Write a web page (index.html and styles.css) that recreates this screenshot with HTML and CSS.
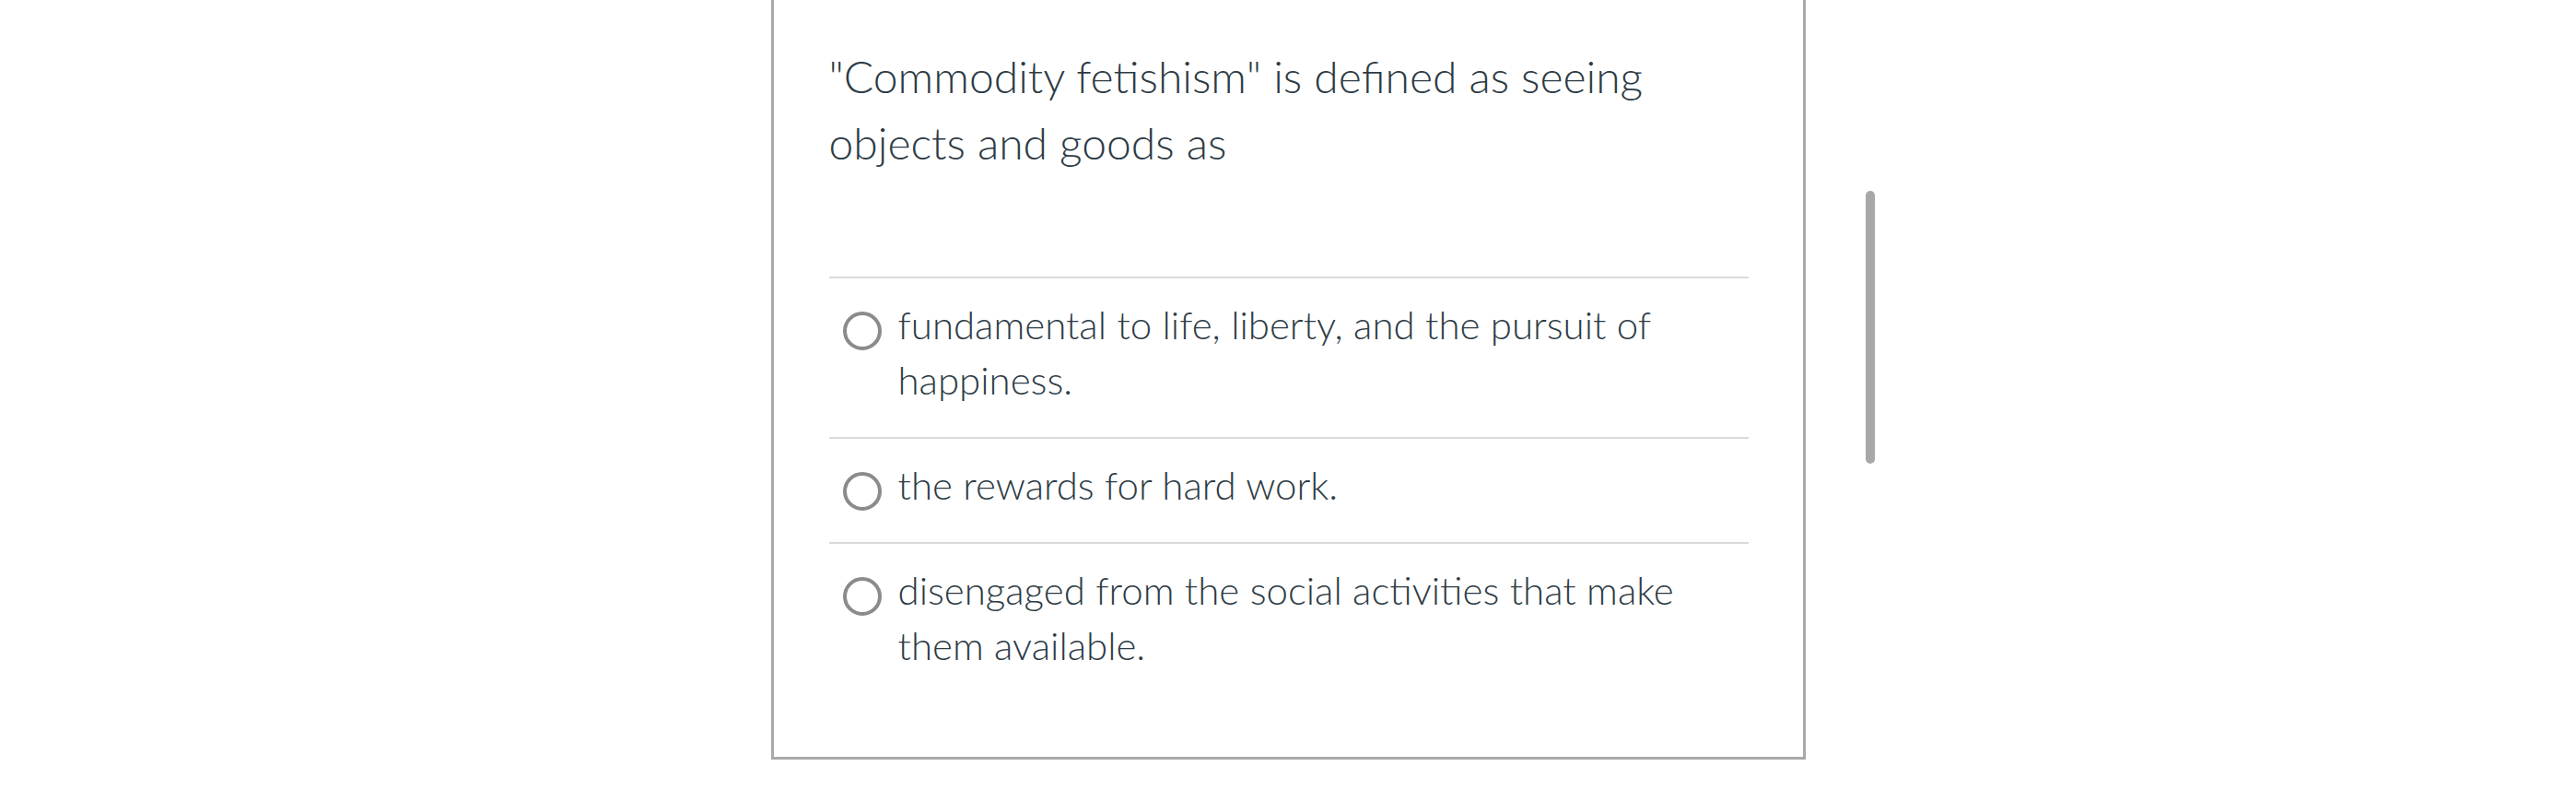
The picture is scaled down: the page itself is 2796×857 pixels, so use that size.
FILE: index.html
```html
<!DOCTYPE html>
<html lang="en">
<head>
<meta charset="utf-8">
<title>Quiz question</title>
<link rel="stylesheet" href="styles.css">
</head>
<body>
<main class="page">
  <section class="card">
    <div class="question">"Commodity fetishism" is defined as seeing objects and goods as</div>
    <div class="answers">
      <label class="answer"><span class="radio"></span><span class="answer-text">fundamental to life, liberty, and the pursuit of happiness.</span></label>
      <label class="answer"><span class="radio"></span><span class="answer-text">the rewards for hard work.</span></label>
      <label class="answer"><span class="radio"></span><span class="answer-text">disengaged from the social activities that make them available.</span></label>
    </div>
  </section>
  <div class="scroll-thumb"></div>
</main>
</body>
</html>
```
FILE: styles.css
```css
html, body {
  margin: 0;
  padding: 0;
  background: #ffffff;
}

.page {
  position: relative;
  width: 2796px;
  height: 857px;
  overflow: hidden;
  display: flex;
  justify-content: center;
  font-family: "Lato", "Liberation Sans", sans-serif;
  font-weight: 300;
  color: #2d3b45;
}

.card {
  box-sizing: border-box;
  width: 1123px;
  height: 824px;
  border: 3px solid #a9a9a9;
  border-top: none;
  padding: 47px 59px 0 60px;
}

.question {
  font-size: 48px;
  line-height: 72px;
  width: 960px;
  margin-bottom: 109px;
}

.answers {
  display: flex;
  flex-direction: column;
}

.answer {
  display: flex;
  align-items: flex-start;
  gap: 18px;
  border-top: 2px solid #dadada;
  padding: 20px 0 32px 15px;
}

.radio {
  flex-shrink: 0;
  box-sizing: border-box;
  width: 42px;
  height: 42px;
  margin-top: 16px;
  border: 4px solid #8b8b8b;
  border-radius: 50%;
}

.answer-text {
  font-size: 42px;
  line-height: 60px;
  max-width: 880px;
}

.scroll-thumb {
  position: absolute;
  left: 2025px;
  top: 207px;
  width: 10px;
  height: 296px;
  border-radius: 5px;
  background: #a8a8a8;
}
```
